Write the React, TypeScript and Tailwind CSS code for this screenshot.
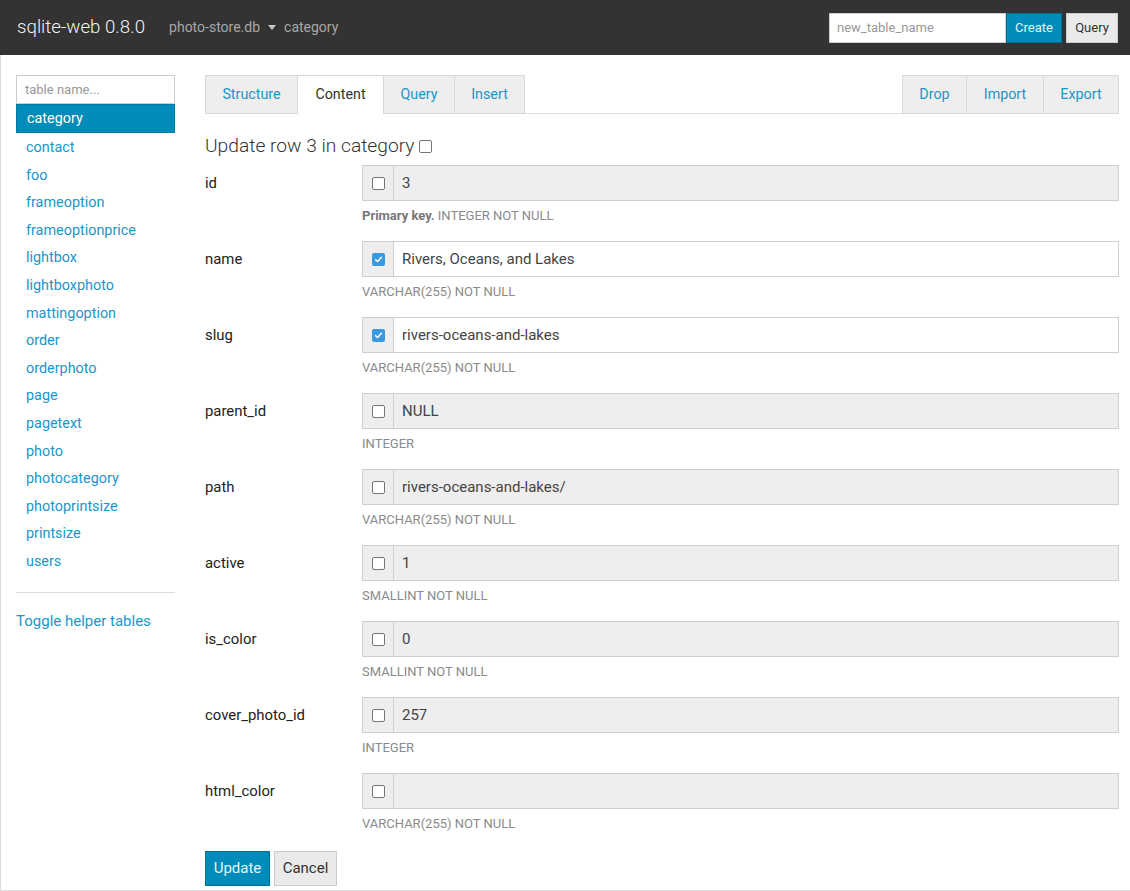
import React from "react";

const tables = [
  "contact",
  "foo",
  "frameoption",
  "frameoptionprice",
  "lightbox",
  "lightboxphoto",
  "mattingoption",
  "order",
  "orderphoto",
  "page",
  "pagetext",
  "photo",
  "photocategory",
  "photoprintsize",
  "printsize",
  "users",
];

type Field = {
  name: string;
  value: string;
  checked: boolean;
  help: string;
  pk?: boolean;
};

const fields: Field[] = [
  { name: "id", value: "3", checked: false, help: "INTEGER NOT NULL", pk: true },
  { name: "name", value: "Rivers, Oceans, and Lakes", checked: true, help: "VARCHAR(255) NOT NULL" },
  { name: "slug", value: "rivers-oceans-and-lakes", checked: true, help: "VARCHAR(255) NOT NULL" },
  { name: "parent_id", value: "NULL", checked: false, help: "INTEGER" },
  { name: "path", value: "rivers-oceans-and-lakes/", checked: false, help: "VARCHAR(255) NOT NULL" },
  { name: "active", value: "1", checked: false, help: "SMALLINT NOT NULL" },
  { name: "is_color", value: "0", checked: false, help: "SMALLINT NOT NULL" },
  { name: "cover_photo_id", value: "257", checked: false, help: "INTEGER" },
  { name: "html_color", value: "", checked: false, help: "VARCHAR(255) NOT NULL" },
];

function Check({ checked }: { checked: boolean }) {
  if (checked) {
    return (
      <span className="flex h-[13px] w-[13px] items-center justify-center rounded-[2px] bg-[#3b99e0]">
        <svg width="9" height="9" viewBox="0 0 10 10">
          <path d="M1.8 5.2 L4 7.3 L8.3 2.6" fill="none" stroke="white" strokeWidth="1.7" strokeLinecap="round" strokeLinejoin="round" />
        </svg>
      </span>
    );
  }
  return <span className="block h-[13px] w-[13px] rounded-[2px] border border-[#767676] bg-white" />;
}

export default function App() {
  return (
    <div className="min-h-[891px] bg-white text-[#222]" style={{ fontFamily: "Roboto, 'Liberation Sans', sans-serif" }}>
      {/* Navbar */}
      <div className="flex h-[55px] items-center bg-[#333333] pl-[17px] pr-[12px]">
        <span className="text-[18.7px] font-light text-[#f2f2f2]">sqlite-web 0.8.0</span>
        <span className="ml-[24px] flex items-center text-[14px] text-[#a8a8a8]">
          photo-store.db
          <svg className="ml-[8px] mr-[8px]" width="8" height="5" viewBox="0 0 8 5">
            <path d="M0 0 L8 0 L4 5 Z" fill="#c8c8c8" />
          </svg>
          category
        </span>
        <div className="ml-auto flex items-center">
          <div className="flex h-[30px] w-[177px] items-center border border-[#ccc] bg-white pl-[7px] text-[13px] text-[#999]">
            new_table_name
          </div>
          <button className="flex h-[30px] w-[56px] items-center justify-center border border-[#007095] bg-[#008cba] text-[13px] text-[#e6f3f8]">
            Create
          </button>
          <button className="ml-[4px] flex h-[30px] w-[52px] items-center justify-center border border-[#ccc] bg-[#eaeaea] text-[13px] text-[#333]">
            Query
          </button>
        </div>
      </div>

      <div className="flex min-h-[836px] border-b border-l border-[#dcdcdc] pb-[4px]">
        {/* Sidebar */}
        <div className="ml-[15px] mt-[20px] w-[159px] shrink-0">
          <div className="flex h-[29px] items-center border border-[#ccc] bg-white pl-[8px] text-[13px] text-[#999]">
            table name...
          </div>
          <div className="flex h-[29px] items-center border border-[#007a9f] bg-[#008cba] pl-[10px] text-[14.4px] text-white">
            category
          </div>
          <div className="pt-[1px]">
            {tables.map((t) => (
              <div key={t} className="flex h-[27.6px] items-center pl-[10px] text-[14.4px] text-[#1a96c9]">
                {t}
              </div>
            ))}
          </div>
          <div className="mt-[16px] border-t border-[#ddd]" />
          <div className="mt-[17px] text-[15px] text-[#1a96c9]">Toggle helper tables</div>
        </div>

        {/* Main */}
        <div className="ml-[30px] mr-[11px] mt-[20px] flex-1">
          <div className="flex h-[39px] border-b border-[#ddd]">
            <div className="flex h-[39px] w-[93px] items-center justify-center border border-[#d8d8d8] bg-[#eeeeee] text-[14.3px] text-[#1a96c9]">Structure</div>
            <div className="flex h-[39px] w-[86px] items-center justify-center border-r border-t border-[#d8d8d8] bg-white text-[14.3px] text-[#333]">Content</div>
            <div className="flex h-[39px] w-[71px] items-center justify-center border border-l-0 border-[#d8d8d8] bg-[#eeeeee] text-[14.3px] text-[#1a96c9]">Query</div>
            <div className="flex h-[39px] w-[70px] items-center justify-center border border-l-0 border-[#d8d8d8] bg-[#eeeeee] text-[14.3px] text-[#1a96c9]">Insert</div>
            <div className="ml-auto flex">
              <div className="flex h-[39px] w-[65px] items-center justify-center border border-[#d8d8d8] bg-[#eeeeee] text-[14.3px] text-[#1a96c9]">Drop</div>
              <div className="flex h-[39px] w-[77px] items-center justify-center border border-l-0 border-[#d8d8d8] bg-[#eeeeee] text-[14.3px] text-[#1a96c9]">Import</div>
              <div className="flex h-[39px] w-[75px] items-center justify-center border border-l-0 border-[#d8d8d8] bg-[#eeeeee] text-[14.3px] text-[#1a96c9]">Export</div>
            </div>
          </div>

          <div className="mt-[20px] flex h-[25px] items-center text-[19.2px] font-light text-[#333]">
            Update row 3 in category
            <span className="ml-[5px]"><Check checked={false} /></span>
          </div>

          <div className="mt-[6px]">
            {fields.map((f) => (
              <div key={f.name} className="flex h-[76px]">
                <div className="flex h-[36px] w-[157px] shrink-0 items-center pt-[1px] text-[14.9px] text-[#222]">{f.name}</div>
                <div className="flex-1">
                  <div className={`flex h-[36px] border border-[#cfcfcf] ${f.checked ? "bg-white" : "bg-[#eeeeee]"}`}>
                    <div className="flex w-[31px] shrink-0 items-center justify-center border-r border-[#cfcfcf] bg-[#eeeeee]">
                      <Check checked={f.checked} />
                    </div>
                    <div className="flex items-center pl-[8px] pt-[1px] text-[15px] text-[#444]">{f.value}</div>
                  </div>
                  <div className="mt-[5px] text-[13px] text-[#8a8a8a]">
                    {f.pk && <span className="font-bold text-[#777]">Primary key. </span>}
                    {f.help}
                  </div>
                </div>
              </div>
            ))}
          </div>

          <div className="mt-[2px] flex">
            <button className="flex h-[35px] w-[65px] items-center justify-center border border-[#007095] bg-[#008cba] text-[15px] text-[#e6f3f8]">
              Update
            </button>
            <button className="ml-[4px] flex h-[35px] w-[63px] items-center justify-center border border-[#ccc] bg-[#eaeaea] text-[15px] text-[#333]">
              Cancel
            </button>
          </div>
        </div>
      </div>
    </div>
  );
}
